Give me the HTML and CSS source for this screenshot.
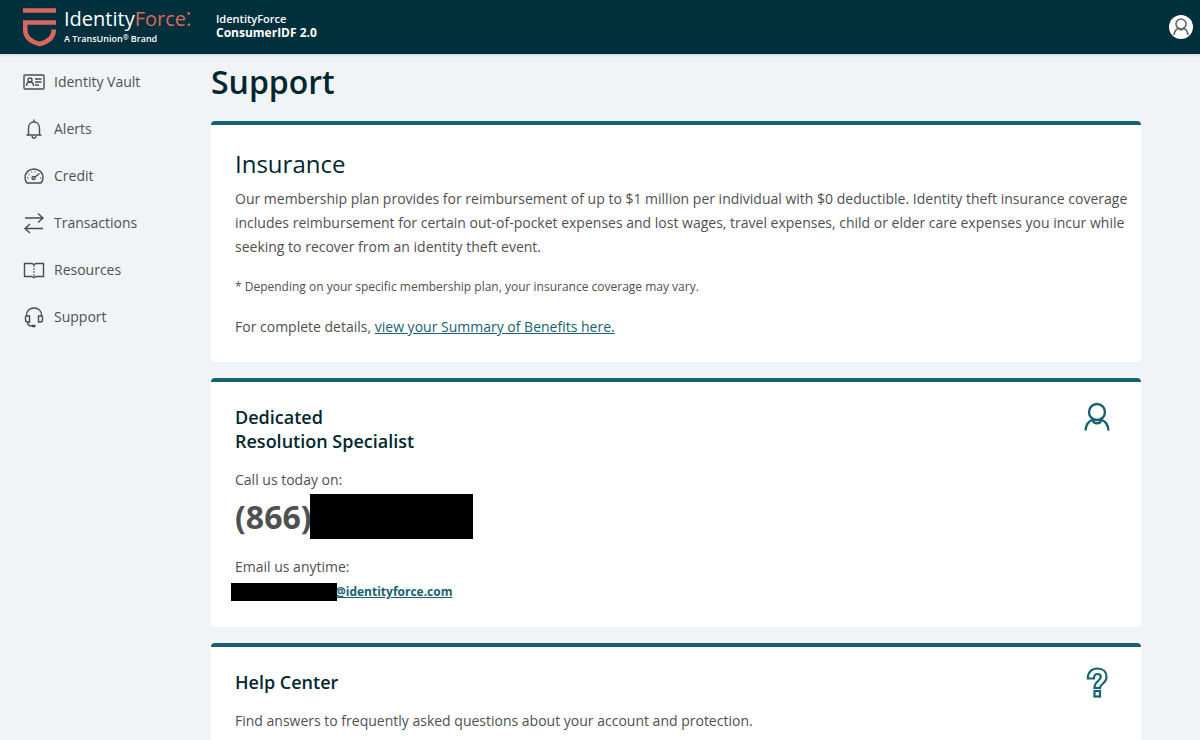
FILE: index.html
```html
<!DOCTYPE html>
<html lang="en">

<head>
    <meta charset="UTF-8">
    <meta name="viewport" content="width=device-width, initial-scale=1.0">
    <title>Support</title>
    <link rel="stylesheet" href="styles.css">
</head>

<body>
    <!-- Top bar -->
    <header class="topbar">
        <a href="#" class="logo">
            <svg class="logo-mark" viewBox="0 0 34 40" width="34" height="40" fill="none" stroke="#d9675f" stroke-width="4.500">
                <path d="M1 3.500h33" />
                <path d="M34 15.500H3.200v7c0 8.500 6.500 12.500 14.300 14.500 7.800-2 14.300-6 14.300-14.500" />
            </svg>
            <span class="logo-text">
                <span class="logo-name">Identity<span class="logo-accent">Force.<sup>•</sup></span></span>
                <span class="logo-tagline">A TransUnion<sup>®</sup> Brand</span>
            </span>
        </a>
        <div class="plan">
            <span class="plan-brand">IdentityForce</span>
            <span class="plan-name">ConsumerIDF 2.0</span>
        </div>
        <button type="button" class="account" aria-label="Account">
            <svg viewBox="0 0 24 24" width="24" height="24" fill="none" stroke="#5c6468" stroke-width="1.600">
                <circle cx="12" cy="9" r="5" />
                <path d="M5 20c.4-4 2.300-6 4.600-6.800.2 1.200 1 1.800 2.400 1.800s2.200-.6 2.400-1.800C16.700 14 18.600 16 19 20" />
            </svg>
        </button>
    </header>

    <div class="layout">
        <!-- Side menu -->
        <nav class="sidebar">
            <a href="#">
                <svg viewBox="0 0 22 22" width="22" height="22">
                    <rect x="1" y="4" width="20" height="14" rx="1" />
                    <circle cx="7" cy="9" r="2" />
                    <path d="M3.500 15c0-2.500 1.500-4 3.500-4s3.500 1.500 3.500 4M12 8h6.500M12 11h6.500M12 14h4" />
                </svg>
                Identity Vault
            </a>
            <a href="#">
                <svg viewBox="0 0 22 22" width="22" height="22">
                    <path d="M11 1.500v2M3.500 17h15M5.500 16.500V10c0-3.500 2.200-6 5.500-6s5.500 2.500 5.500 6v6.500M9 18c.2 1.600 1 2.200 2 2.200s1.800-.6 2-2.200" />
                </svg>
                Alerts
            </a>
            <a href="#">
                <svg viewBox="0 0 22 22" width="22" height="22">
                    <path d="M4 18h14c1.200-1.600 2-3.500 2-5.500C20 7.500 16 4 11 4s-9 3.500-9 8.500c0 2 .8 3.900 2 5.500z" />
                    <circle cx="10.500" cy="13" r="1.500" />
                    <path d="M12 12l4.500-3.500" />
                    <path d="M4 13h1.500M5.500 9l1 .8M8.500 6.500l.5 1M12 6v1.200M17 13h1.500" stroke-width="1" />
                </svg>
                Credit
            </a>
            <a href="#">
                <svg viewBox="0 0 22 22" width="22" height="22">
                    <path d="M2 6h18M15 1.500L20 6l-5 4.500M20 16.500H2M7 12l-5 4.500L7 21" />
                </svg>
                Transactions
            </a>
            <a href="#">
                <svg viewBox="0 0 22 22" width="22" height="22">
                    <path d="M1.500 4.500H9l2 1.200 2-1.200h7.500v13H13l-2 1.200-2-1.200H1.500z" />
                    <path d="M11 6v12" stroke-width="1" stroke-dasharray="2 1" />
                </svg>
                Resources
            </a>
            <a href="#">
                <svg viewBox="0 0 22 22" width="22" height="22">
                    <path d="M3.500 10V9.500C3.500 5 6.500 2 11 2s7.500 3 7.500 7.500v.5" />
                    <path d="M3 10h3.500v6H4.500C3.300 16 2.500 15 2.500 13.500V11zM19 10h-3.500v6h2c1.200 0 2-1 2-2.500V11zM4.500 16c0 2.500 1.500 4 4.500 4" />
                    <path d="M9 20h3.500" stroke-width="2.500" />
                </svg>
                Support
            </a>
        </nav>

        <main class="content">
            <h1>Support</h1>

            <!-- Insurance -->
            <section class="card">
                <h2>Insurance</h2>
                <p>Our membership plan provides for reimbursement of up to $1 million per individual with $0 deductible. Identity theft insurance coverage includes reimbursement for certain out-of-pocket expenses and lost wages, travel expenses, child or elder care expenses you incur while seeking to recover from an identity theft event.</p>
                <p class="note">* Depending on your specific membership plan, your insurance coverage may vary.</p>
                <p>For complete details, <a href="#">view your Summary of Benefits here.</a></p>
            </section>

            <!-- Resolution specialist -->
            <section class="card">
                <div class="card-head">
                    <h3>Dedicated<br>Resolution Specialist</h3>
                    <svg class="card-icon" viewBox="0 0 32 32" width="32" height="32" fill="none" stroke="#18626f" stroke-width="2.400">
                        <circle cx="16" cy="11" r="8" />
                        <path d="M4.500 29.500c.5-6 3.500-9.500 7.500-10.800 0 2.200 1.500 3.600 4 3.600s4-1.400 4-3.600c4 1.300 7 4.800 7.500 10.800" />
                    </svg>
                </div>
                <div class="contact">Call us today on:</div>
                <div class="phone">(866)<span class="phone-hidden"></span></div>
                <div class="contact">Email us anytime:</div>
                <div class="email"><span class="email-hidden"></span><a href="#">@identityforce.com</a></div>
            </section>

            <!-- Help center -->
            <section class="card">
                <div class="card-head">
                    <h3>Help Center</h3>
                    <svg class="card-icon" viewBox="0 0 32 32" width="32" height="32" fill="none" stroke="#18626f" stroke-width="2.200">
                        <path d="M6.800 12.500C6.800 6 11 2.500 16.500 2.500S25.500 6 25.500 11c0 3.500-2 5.500-4.500 7.500-1.500 1.200-2 2-2 3.500h-5.500c0-3.500 1-5 3.500-7 1.800-1.500 2.800-2.400 2.800-4 0-2-1.300-3-3.300-3s-3.500 1.500-3.500 4.500z" />
                        <rect x="13.500" y="25" width="5.500" height="5.500" />
                    </svg>
                </div>
                <p>Find answers to frequently asked questions about your account and protection.</p>
            </section>
        </main>
    </div>
</body>

</html>
```
FILE: styles.css
```css
body {
    margin: 0;
    font-family: "Open Sans", sans-serif;
    font-size: 14px;
    line-height: 24px;
    background-color: #f1f4f7;
    color: #4f5052;
}

a {
    color: #18626f;
}

/* Top bar */
.topbar {
    display: flex;
    align-items: center;
    height: 54px;
    padding: 0 7px 0 22px;
    background-color: #00303c;
    color: #fff;
    box-shadow: 0 1px 3px rgba(0, 0, 0, 0.15);
}

.logo {
    display: flex;
    align-items: center;
    gap: 8px;
    width: 194px;
    color: #fff;
    text-decoration: none;
}

.logo-text,
.plan {
    display: flex;
    flex-direction: column;
}

.logo-text {
    padding-bottom: 2px;
}

.logo-name {
    font-size: 20px;
    line-height: 26px;
}

.logo-name sup {
    margin-left: -5px;
    font-size: 12px;
    line-height: 0;
    vertical-align: 8px;
}

.logo-accent {
    color: #d9675f;
}

.logo-tagline {
    font-size: 9px;
    line-height: 14px;
    font-weight: 600;
}

.logo-tagline sup {
    font-size: 7px;
    line-height: 0;
    vertical-align: 2px;
}

.plan {
    padding-bottom: 2px;
    line-height: 14px;
    font-size: 12px;
    font-weight: bold;
}

.plan-brand {
    font-size: 11px;
    font-weight: 600;
}

.account {
    display: flex;
    margin-left: auto;
    padding: 0;
    border: none;
    border-radius: 50%;
    background-color: #fff;
    cursor: pointer;
}

.layout {
    display: flex;
}

/* Side menu */
.sidebar {
    flex: 0 0 188px;
    display: flex;
    flex-direction: column;
    gap: 23px;
    padding: 16px 0 0 23px;
}

.sidebar a {
    display: flex;
    align-items: center;
    gap: 9px;
    color: #4f5052;
    text-decoration: none;
}

.sidebar svg {
    fill: none;
    stroke: #4b4b4d;
    stroke-width: 1.4;
}

/* Main column */
.content {
    flex: 1;
    padding: 8px 59px 24px 0;
}

h1,
h2,
h3 {
    margin: 0;
    color: #00262f;
}

h1 {
    margin-bottom: 19px;
    font-size: 32px;
    line-height: 40px;
    font-weight: 600;
}

h2 {
    margin-bottom: 7px;
    font-size: 24px;
    line-height: 32px;
    font-weight: 400;
}

h3 {
    font-size: 18px;
    line-height: 24px;
    font-weight: 600;
}

.card {
    margin-bottom: 16px;
    padding: 23px 8px 23px 24px;
    border-top: 4px solid #18626f;
    border-radius: 4px;
    background-color: #fff;
}

.card p {
    margin: 0 0 16px;
}

.card p:last-child {
    margin-bottom: 0;
}

.card .note {
    font-size: 12px;
}

.card-head {
    display: flex;
    justify-content: space-between;
    align-items: flex-start;
    margin-bottom: 15px;
}

.card-icon {
    margin: -4px 20px -4px 0;
}

/* Contact details */
.phone {
    display: flex;
    align-items: center;
    margin: 2px 0 16px;
    font-size: 32px;
    line-height: 45px;
    font-weight: bold;
}

.phone-hidden {
    width: 163px;
    height: 45px;
    margin-left: -2px;
    background-color: #000;
}

.email {
    display: flex;
    align-items: center;
    margin-top: 1px;
    font-size: 12px;
    font-weight: bold;
}

/* The bar covers the start of the address */
.email-hidden {
    z-index: 1;
    width: 106px;
    height: 18px;
    margin: 0 -2px 0 -4px;
    background-color: #000;
}
```
